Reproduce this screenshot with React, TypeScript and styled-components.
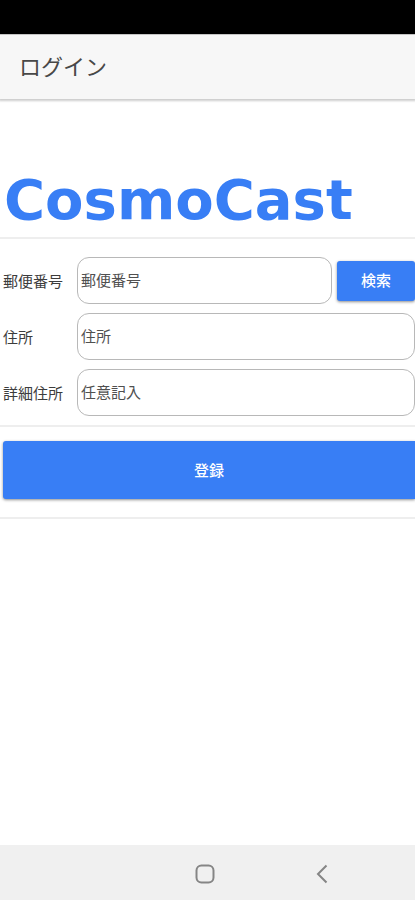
import React from "react";
import styled, { createGlobalStyle } from "styled-components";

const GlobalStyle = createGlobalStyle`
  *, *::before, *::after { box-sizing: border-box; }
  body {
    margin: 0;
    background: #fff;
    color: #3c3c3c;
    font-family: "Noto Sans CJK JP", sans-serif;
    font-size: 15px;
  }
  button, input { font: inherit; }
`;

const Screen = styled.div`
  display: flex;
  flex-direction: column;
  min-height: 100vh;
`;

const StatusBar = styled.div`
  height: 34px;
  background: #000;
`;

const Header = styled.header`
  display: flex;
  align-items: center;
  height: 65px;
  padding: 0 19px 4px;
  background: #f7f7f7;
  border-top: 1px solid #c4c4c4;
  box-shadow: 0 1px 2px 1px rgba(0, 0, 0, 0.2);
`;

const Title = styled.h1`
  margin: 0;
  font-size: 22px;
  font-weight: 400;
  line-height: 32px;
  color: #484848;
`;

const Main = styled.main`
  flex: 1;
`;

const Logo = styled.div`
  padding: 66px 4px 2px;
  color: #387ef5;
  font-family: "DejaVu Sans", Verdana, sans-serif;
  font-size: 56px;
  font-weight: 700;
  line-height: 70px;
`;

const Divider = styled.hr`
  height: 2px;
  margin: 0;
  border: 0;
  background: #eee;
`;

const Fields = styled.div`
  display: grid;
  gap: 9px;
  padding: 18px 0 9px;
`;

const Row = styled.div`
  display: grid;
  grid-template-columns: 73px 1fr auto;
  align-items: center;
`;

const Label = styled.label`
  padding-left: 3px;
  line-height: 24px;
`;

const FieldCell = styled.div<{ $wide?: boolean }>`
  grid-column: ${({ $wide }) => ($wide ? "2 / -1" : "auto")};
  display: flex;
  min-width: 0;
  padding-left: 4px;
`;

const TextField = styled.input`
  flex: 1;
  min-width: 0;
  height: 47px;
  padding: 0 3px 2px;
  margin: 0;
  color: #3c3c3c;
  background: #fff;
  border: 1px solid #b8b8b8;
  border-radius: 12px;
  &::placeholder { color: #505050; opacity: 1; }
`;

const Button = styled.button`
  padding: 0 0 2px;
  color: #fff;
  font-weight: 500;
  background: #387ef5;
  border: 0;
  border-radius: 3px;
  box-shadow: 0 1px 3px rgba(0, 0, 0, 0.45);
`;

const SearchButton = styled(Button)`
  width: 78px;
  height: 40px;
  margin-left: 5px;
`;

const Actions = styled.div`
  display: flex;
  padding: 14px 0 18px 3px;
`;

const SubmitButton = styled(Button)`
  flex: 1;
  height: 58px;
  border-radius: 3px 0 0 3px;
`;

const NavBar = styled.nav`
  display: grid;
  grid-template-columns: repeat(3, 117px);
  justify-content: center;
  height: 55px;
  padding-right: 5px;
  background: #f0f0f0;
`;

const NavButton = styled.button<{ $column: number }>`
  grid-column: ${({ $column }) => $column};
  display: flex;
  align-items: center;
  justify-content: center;
  padding: 2px 0 0;
  border: 0;
  background: none;
  color: #858585;
`;

export default function App() {
  return (
    <>
      <GlobalStyle />
      <Screen>
        <StatusBar />
        <Header>
          <Title>ログイン</Title>
        </Header>
        <Main>
          <Logo>CosmoCast</Logo>
          <Divider />
          <form onSubmit={(e) => e.preventDefault()}>
            <Fields>
              <Row>
                <Label htmlFor="postal">郵便番号</Label>
                <FieldCell>
                  <TextField id="postal" placeholder="郵便番号" />
                </FieldCell>
                <SearchButton type="button">検索</SearchButton>
              </Row>
              <Row>
                <Label htmlFor="address">住所</Label>
                <FieldCell $wide>
                  <TextField id="address" placeholder="住所" />
                </FieldCell>
              </Row>
              <Row>
                <Label htmlFor="detail">詳細住所</Label>
                <FieldCell $wide>
                  <TextField id="detail" placeholder="任意記入" />
                </FieldCell>
              </Row>
            </Fields>
            <Divider />
            <Actions>
              <SubmitButton type="submit">登録</SubmitButton>
            </Actions>
            <Divider />
          </form>
        </Main>
        <NavBar>
          <NavButton type="button" aria-label="ホーム" $column={2}>
            <svg width="20" height="20" viewBox="0 0 20 20" fill="none" stroke="currentColor" strokeWidth="2">
              <rect x="1.5" y="1.5" width="17" height="17" rx="5" />
            </svg>
          </NavButton>
          <NavButton type="button" aria-label="戻る" $column={3}>
            <svg width="12" height="20" viewBox="0 0 12 20" fill="none" stroke="currentColor" strokeWidth="2">
              <path d="M10.5 1.5 2 10l8.500 8.500" />
            </svg>
          </NavButton>
        </NavBar>
      </Screen>
    </>
  );
}
